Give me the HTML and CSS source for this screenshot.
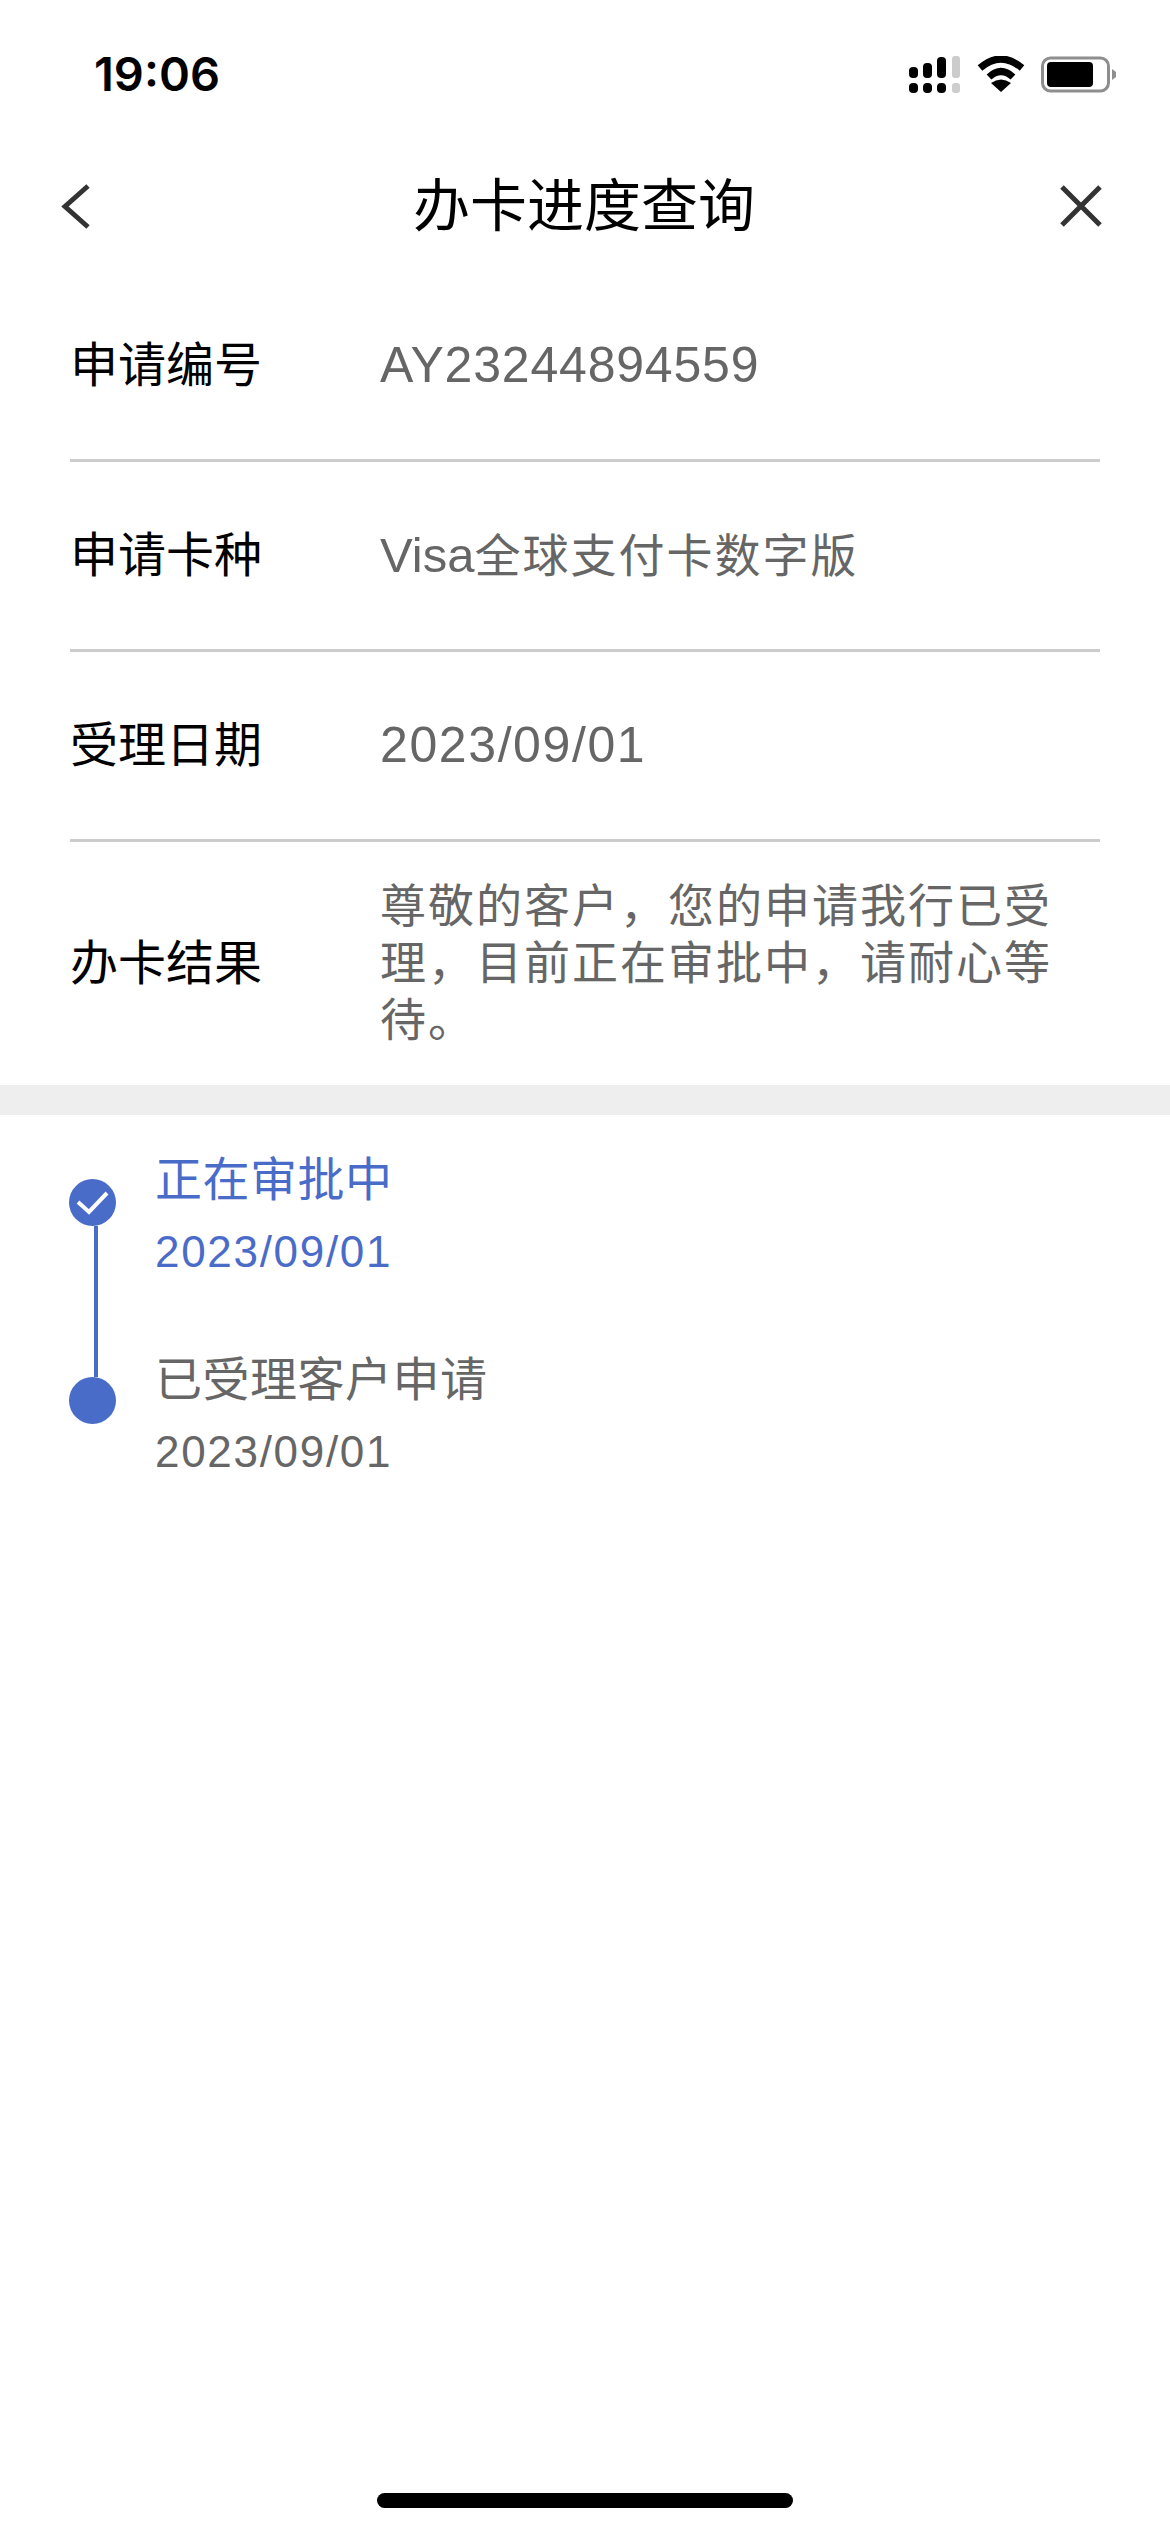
FILE: index.html
```html
<!DOCTYPE html>
<html lang="zh-CN">
<head>
  <meta charset="UTF-8">
  <title>办卡进度查询</title>
  <link rel="stylesheet" href="styles.css">
</head>
<body>

  <!-- Status bar -->
  <div class="status-bar">
    <span class="time">19:06</span>
    <div class="status-icons">
      <svg width="52" height="37" viewBox="0 0 52 37">
        <g fill="#000">
          <rect x="0" y="11" width="9" height="11" rx="4"/>
          <rect x="14" y="7" width="9" height="15" rx="4"/>
          <rect x="28" y="1" width="9" height="21" rx="4"/>
          <rect x="0" y="27" width="9" height="10" rx="4"/>
          <rect x="14" y="27" width="9" height="10" rx="4"/>
          <rect x="28" y="27" width="9" height="10" rx="4"/>
        </g>
        <g fill="#ccc">
          <rect x="43" y="0" width="8" height="22" rx="3"/>
          <rect x="43" y="27" width="8" height="10" rx="3"/>
        </g>
      </svg>
      <svg width="48" height="37" viewBox="0 0 48 37">
        <path d="M3 12 Q24 -6 45 12" fill="none" stroke="#000" stroke-width="7"/>
        <path d="M12 21 Q24 10 36 21" fill="none" stroke="#000" stroke-width="7"/>
        <path d="M24 36 L14 27 Q24 20 34 27 Z" fill="#000"/>
      </svg>
      <svg width="76" height="37" viewBox="0 0 76 37">
        <rect x="1.5" y="2" width="66" height="33" rx="8" fill="none" stroke="#8e8e8e" stroke-width="3"/>
        <rect x="6" y="6" width="46" height="25" rx="4" fill="#000"/>
        <path d="M71 13 L75 16 V21 L71 24 Z" fill="#8e8e8e"/>
      </svg>
    </div>
  </div>

  <!-- Nav -->
  <div class="nav-bar">
    <svg class="nav-back" width="29" height="45" viewBox="0 0 29 45">
      <path d="M27 2 L4 22.5 L27 43" fill="none" stroke="#333" stroke-width="5"/>
    </svg>
    <h1>办卡进度查询</h1>
    <svg class="nav-close" width="42" height="42" viewBox="0 0 42 42">
      <path d="M2 2 L40 40 M40 2 L2 40" fill="none" stroke="#333" stroke-width="5"/>
    </svg>
  </div>

  <!-- Details -->
  <div class="info-list">
    <div class="info-row">
      <div class="info-label">申请编号</div>
      <div class="info-value"><span class="latin">AY23244894559</span></div>
    </div>
    <div class="info-row">
      <div class="info-label">申请卡种</div>
      <div class="info-value"><span class="latin latin-word">Visa</span>全球支付卡数字版</div>
    </div>
    <div class="info-row">
      <div class="info-label">受理日期</div>
      <div class="info-value"><span class="latin latin-date">2023/09/01</span></div>
    </div>
    <div class="info-row info-row-last">
      <div class="info-label">办卡结果</div>
      <div class="info-value">尊敬的客户，您的申请我行已受理，目前正在审批中，请耐心等待。</div>
    </div>
  </div>

  <div class="band"></div>

  <!-- Progress -->
  <div class="timeline">
    <div class="timeline-marks">
      <div class="dot">
        <svg width="33" height="25" viewBox="0 0 33 25">
          <path d="M2 12 L13 22 L31 3" fill="none" stroke="#fff" stroke-width="4"/>
        </svg>
      </div>
      <div class="timeline-line"></div>
      <div class="dot"></div>
    </div>
    <div class="timeline-steps">
      <div class="step step-active">
        <div class="step-title">正在审批中</div>
        <div class="step-date">2023/09/01</div>
      </div>
      <div class="step">
        <div class="step-title">已受理客户申请</div>
        <div class="step-date">2023/09/01</div>
      </div>
    </div>
  </div>

  <div class="home-bar"></div>

</body>
</html>
```

FILE: styles.css
```css
/* General Styles */
html, body {
  margin: 0;
  padding: 0;
}

body {
  width: 1170px;
  height: 2532px;
  position: relative;
  overflow: hidden;
  background-color: #fff;
  font-family: "Liberation Sans", "Noto Sans CJK SC", sans-serif;
}

/* Status bar */
.status-bar {
  height: 140px;
  box-sizing: border-box;
  padding: 50px 53px 0 94px;
  display: flex;
  justify-content: space-between;
  align-items: flex-start;
}

.time {
  font-family: Inter, "Liberation Sans", sans-serif;
  font-size: 47px;
  font-weight: 600;
  line-height: 48px;
  color: #000;
}

.status-icons {
  display: flex;
  align-items: flex-start;
  gap: 16px;
  padding-top: 6px;
}

/* Nav */
.nav-bar {
  height: 132px;
  box-sizing: border-box;
  padding: 0 68px 0 61px;
  display: grid;
  grid-template-columns: 1fr auto 1fr;
  align-items: center;
}

.nav-bar h1 {
  margin: 0 0 0 5px;
  font-size: 57px;
  font-weight: 400;
  line-height: 60px;
  color: #000;
}

.nav-close {
  justify-self: end;
}

/* Details */
.info-list {
  padding: 0 70px;
}

.info-row {
  height: 190px;
  box-sizing: border-box;
  display: flex;
  align-items: center;
  border-bottom: 3px solid #ccc;
}

.info-row-last {
  height: 243px;
  border-bottom: none;
}

.info-label {
  width: 310px;
  flex-shrink: 0;
  font-size: 48px;
  line-height: 57px;
  color: #000;
}

.info-value {
  font-size: 46px;
  line-height: 57px;
  letter-spacing: 2px;
  color: #666;
}

.latin {
  font-size: 50px;
  letter-spacing: 0.8px;
}

.latin-word {
  font-size: 49px;
  letter-spacing: 0;
}

.latin-date {
  letter-spacing: 1.6px;
}

.band {
  height: 30px;
  background-color: #eee;
}

/* Progress */
.timeline {
  padding: 30px 0 0 69px;
  display: flex;
}

.timeline-marks {
  width: 47px;
  padding-top: 34px;
  margin-right: 39px;
  display: flex;
  flex-direction: column;
}

.dot {
  width: 47px;
  height: 47px;
  border-radius: 50%;
  background-color: #4a6cc9;
  display: flex;
  align-items: center;
  justify-content: center;
}

.timeline-line {
  width: 4px;
  height: 151px;
  margin-left: 25px;
  background-color: #4a6cc9;
}

.step {
  height: 200px;
  color: #666;
}

.step-active {
  color: #4a6cc9;
}

.step-title {
  font-size: 47px;
  line-height: 70px;
  letter-spacing: 0.5px;
}

.step-date {
  margin-top: 8px;
  font-size: 44px;
  line-height: 58px;
  letter-spacing: 1.7px;
}

.home-bar {
  position: absolute;
  left: 377px;
  top: 2493px;
  width: 416px;
  height: 15px;
  border-radius: 8px;
  background-color: #000;
}
```
